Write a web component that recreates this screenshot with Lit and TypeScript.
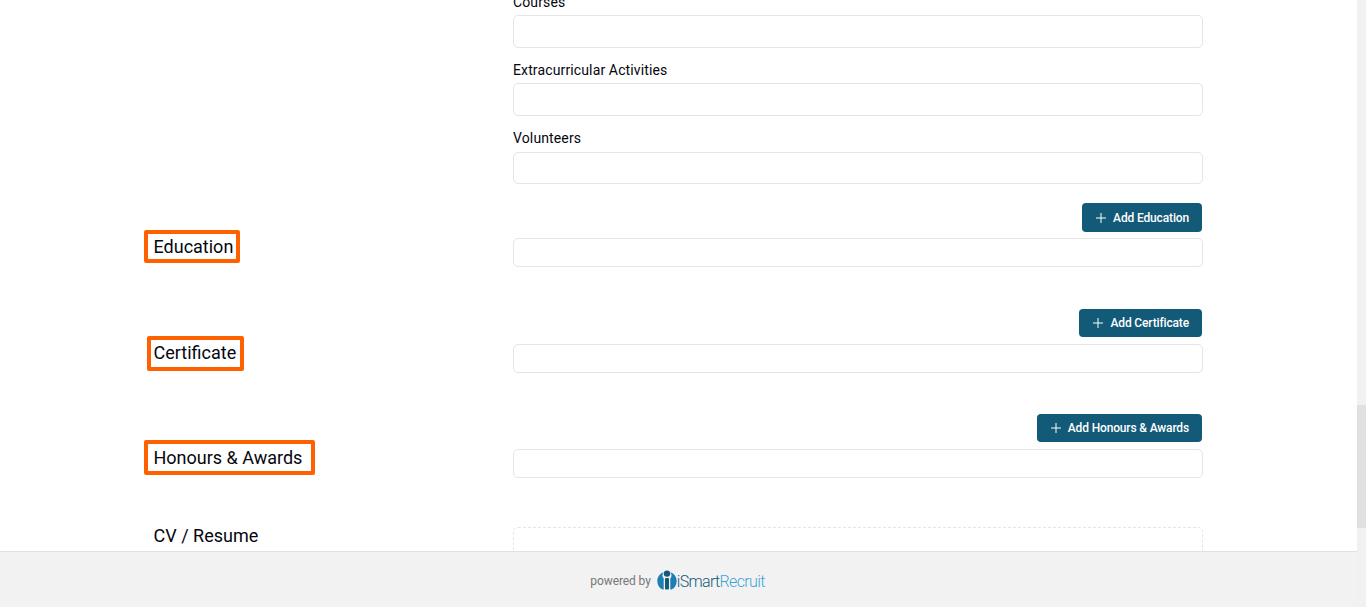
import { LitElement, html, css } from "lit";
import { customElement } from "lit/decorators.js";

@customElement("app-root")
export class AppRoot extends LitElement {
  static styles = css`
    :host {
      display: flex;
      height: 607px;
      overflow: hidden;
      background: #fff;
      color: #05060f;
      font-family: Roboto, "Liberation Sans", sans-serif;
    }
    .page {
      flex: 1;
      min-width: 0;
      display: flex;
      flex-direction: column;
    }
    .content {
      flex: 1;
      min-height: 0;
      overflow: hidden;
    }
    .form {
      margin-top: -8px;
      padding-left: 153px;
      width: 1050px;
    }
    .row {
      display: grid;
      grid-template-columns: 360px 690px;
    }
    .field {
      margin-left: 360px;
      margin-bottom: 12px;
    }
    .field label {
      display: block;
      height: 20px;
      line-height: 20px;
      margin-bottom: 3px;
      font-size: 14px;
      letter-spacing: 0.13px;
    }
    .field label.loose {
      margin-bottom: 4px;
    }
    .input {
      box-sizing: border-box;
      height: 33px;
      background: #fff;
      border: 1px solid #e5e5e5;
      border-radius: 5px;
    }
    .input.short {
      height: 32px;
    }
    .input.slim {
      height: 29px;
    }
    .title {
      align-self: end;
      justify-self: start;
      font-size: 18px;
      line-height: 25px;
      white-space: nowrap;
    }
    .boxed {
      box-sizing: border-box;
      border: 4px solid #ff6000;
      border-radius: 2px;
    }
    .education {
      margin: 0 0 4px -9px;
      padding: 0 2.5px 0 5.5px;
      height: 33px;
    }
    .certificate {
      margin: 0 0 2px -6px;
      padding: 0 3.5px 0 2.5px;
      height: 35px;
    }
    .honours {
      margin: 0 0 3px -9px;
      padding: 1px 8.5px 0 5.5px;
      height: 35px;
    }
    .action {
      display: flex;
      justify-content: flex-end;
      margin: 0 1px 7px 0;
    }
    button {
      display: flex;
      align-items: center;
      gap: 7px;
      height: 28px;
      padding: 0 13px 0 14px;
      border: 0;
      border-radius: 4px;
      background: #125a78;
      color: #fff;
      font: 500 12px Roboto, "Liberation Sans", sans-serif;
      letter-spacing: -0.15px;
    }
    button.tall {
      height: 29px;
    }
    .tight {
      margin-bottom: 6px;
    }
    .section {
      margin-bottom: 42px;
    }
    .section.first {
      margin-top: 19px;
    }
    .section.last {
      margin-bottom: 49px;
    }
    .section.certs {
      margin-bottom: 41px;
    }
    .cv {
      font-size: 18px;
      line-height: 25px;
      margin: -4px 0 0 0.5px;
    }
    .drop {
      height: 120px;
      border: 1px dashed #e5e5e5;
      border-radius: 5px;
      box-sizing: border-box;
    }
    footer {
      flex: none;
      box-sizing: border-box;
      height: 56px;
      padding: 3px 2px 0 0;
      border-top: 1px solid #e0e0e0;
      background: #f2f2f2;
      display: flex;
      align-items: center;
      justify-content: center;
      gap: 6px;
    }
    .powered {
      font-size: 12px;
      letter-spacing: -0.1px;
      color: #777;
    }
    .brand {
      display: flex;
      align-items: center;
      gap: 0;
      font-size: 16px;
      font-weight: 300;
      letter-spacing: -0.65px;
      color: #125a78;
    }
    .brand svg {
      margin-top: -3px;
    }
    .brand span {
      color: #3aa6d8;
    }
    .scrollbar {
      flex: none;
      width: 9px;
      background: #f1f1f1;
    }
    .thumb {
      margin-top: 405px;
      height: 123px;
      background: #e0e0e0;
    }
  `;

  private section(title: string, cls: string, boxCls: string, btn: string, tall = false) {
    return html`
      <div class="row section ${cls}">
        <div class="title boxed ${boxCls}">${title}</div>
        <div>
          <div class="action ${tall ? "tight" : ""}">
            <button class=${tall ? "tall" : ""}>
              <svg width="10" height="10" viewBox="0 0 10 10">
                <path d="M5 0v10M0 5h10" stroke="#fff" stroke-width="1" fill="none" />
              </svg>
              ${btn}
            </button>
          </div>
          <div class="input slim"></div>
        </div>
      </div>
    `;
  }

  render() {
    return html`
      <div class="page">
        <div class="content">
          <div class="form">
            <div class="field"><label>Courses</label><div class="input"></div></div>
            <div class="field"><label>Extracurricular Activities</label><div class="input"></div></div>
            <div class="field"><label class="loose">Volunteers</label><div class="input short"></div></div>
            ${this.section("Education", "first", "education", "Add Education", true)}
            ${this.section("Certificate", "certs", "certificate", "Add Certificate")}
            ${this.section("Honours & Awards", "last", "honours", "Add Honours & Awards")}
            <div class="row">
              <div class="cv">CV / Resume</div>
              <div class="drop"></div>
            </div>
          </div>
        </div>
        <footer>
          <div class="powered">powered by</div>
          <div class="brand">
            <svg width="20" height="20" viewBox="0 0 20 20">
              <path d="M6.5 2.2C3 3.4.3 6.6.3 11c0 4 2 7 5.2 8.6h1.2V8.3C5.2 7.2 5 4.2 6.5 2.2zM13.5 2.2c3.5 1.2 6.2 4.4 6.2 8.8 0 4-2 7-5.2 8.6h-1.2V8.3c1.5-1.1 1.7-4.1.2-6.1z" fill="#1b7fb5" />
              <circle cx="10" cy="3.6" r="3.2" fill="#125a78" />
              <rect x="8" y="8" width="4" height="11.5" rx="1" fill="#125a78" />
            </svg>
            iSmart<span>Recruit</span>
          </div>
        </footer>
      </div>
      <div class="scrollbar"><div class="thumb"></div></div>
    `;
  }
}
